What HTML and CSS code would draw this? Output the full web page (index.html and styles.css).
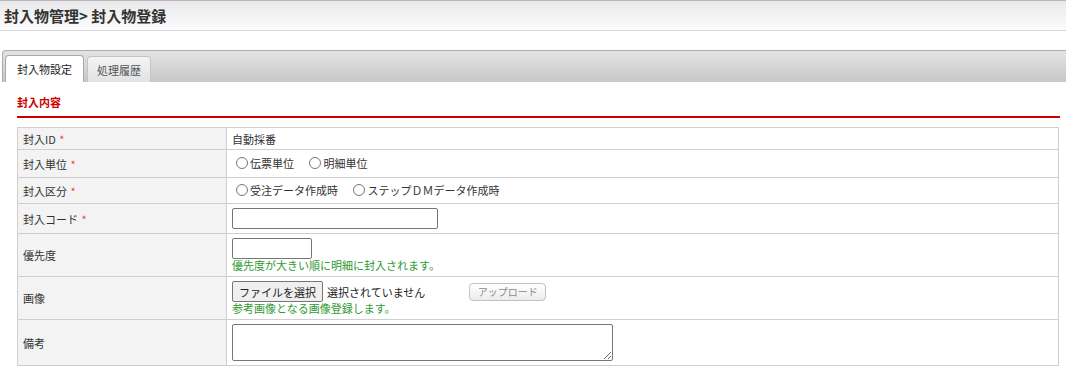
FILE: index.html
```html
<!DOCTYPE html>
<html lang="ja">
<head>
  <meta charset="UTF-8">
  <meta name="viewport" content="width=device-width, initial-scale=1.0">
  <title>封入物登録</title>
  <link rel="stylesheet" href="styles.css">
</head>
<body>
  <div class="page-header">
    <h1>封入物管理&gt; 封入物登録</h1>
  </div>

  <div class="tabs">
    <div class="tab-bar">
      <div class="tab active">封入物設定</div>
      <div class="tab">処理履歴</div>
    </div>

    <div class="panel">
      <h2 class="section-title">封入内容</h2>

      <table class="form-table">
        <tr class="row-id">
          <th>封入ID <span class="req">*</span></th>
          <td>自動採番</td>
        </tr>
        <tr class="row-unit">
          <th>封入単位 <span class="req">*</span></th>
          <td>
            <label class="radio"><input type="radio" name="unit">伝票単位</label>
            <label class="radio"><input type="radio" name="unit">明細単位</label>
          </td>
        </tr>
        <tr class="row-kind">
          <th>封入区分 <span class="req">*</span></th>
          <td>
            <label class="radio"><input type="radio" name="kind">受注データ作成時</label>
            <label class="radio"><input type="radio" name="kind">ステップＤＭデータ作成時</label>
          </td>
        </tr>
        <tr class="row-code">
          <th>封入コード <span class="req">*</span></th>
          <td><input type="text" class="input-code"></td>
        </tr>
        <tr>
          <th>優先度</th>
          <td class="stack">
            <input type="text" class="input-priority">
            <div class="hint">優先度が大きい順に明細に封入されます。</div>
          </td>
        </tr>
        <tr>
          <th>画像</th>
          <td class="stack">
            <div class="file-row">
              <button type="button" class="file-btn">ファイルを選択</button>
              <span class="file-name">選択されていません</span>
              <button type="button" class="upload-btn" disabled>アップロード</button>
            </div>
            <div class="hint">参考画像となる画像登録します。</div>
          </td>
        </tr>
        <tr>
          <th>備考</th>
          <td class="stack"><textarea class="note"></textarea></td>
        </tr>
      </table>
    </div>
  </div>
</body>
</html>
```

FILE: styles.css
```css
body {
  margin: 0;
  font-family: "Noto Sans CJK JP", "Noto Sans", sans-serif;
  font-size: 11px;
  color: #333;
}

.page-header {
  height: 29px;
  padding-left: 4px;
  display: flex;
  align-items: center;
  border-top: 1px solid #b8b5c1;
  border-bottom: 1px solid #d7d5dd;
  background: linear-gradient(#e9e9e9, #fcfcfc);
}

.page-header h1 {
  margin: 0;
  font-size: 15px;
  line-height: 18px;
  font-weight: bold;
  color: #333;
}

.tabs {
  margin: 19px 0 0 2px;
}

.tab-bar {
  height: 26px;
  padding: 5px 0 0 2px;
  display: flex;
  align-items: flex-end;
  gap: 3px;
  border-top: 1px solid #adadad;
  border-left: 1px solid #adadad;
  border-top-left-radius: 4px;
  background: linear-gradient(#e3e3e3, #c8c8c8);
}

.tab {
  height: 25px;
  padding: 0 9px;
  display: flex;
  align-items: center;
  border: 1px solid #c4c4c4;
  border-bottom: none;
  border-radius: 4px 4px 0 0;
  background: linear-gradient(#f4f4f4, #e2e2e2);
  color: #555;
  line-height: 14px;
}

.tab.active {
  height: 26px;
  padding: 0 11px;
  border-color: #a9a9a9;
  background: #fff;
  color: #222;
}

.panel {
  padding: 0 6px 0 15px;
}

.section-title {
  margin: 0;
  padding: 12px 0 6px;
  font-size: 11px;
  line-height: 16px;
  font-weight: bold;
  color: #cc0000;
  border-bottom: 2px solid #cc0000;
}

.form-table {
  width: calc(100% - 1px);
  margin-top: 9px;
  border-collapse: collapse;
  border: 1px solid #cfcfcf;
}

.form-table th,
.form-table td {
  border: 1px solid #cfcfcf;
  padding: 0 5px;
  line-height: 14px;
  vertical-align: middle;
}

.form-table th {
  width: 198px;
  background: #f2f3f2;
  font-weight: normal;
  text-align: left;
  color: #333;
}

.form-table td {
  background: #fff;
}

.row-id { height: 22px; }
.row-unit { height: 28px; }
.row-kind { height: 26px; }
.row-code { height: 30px; }

.form-table td.stack {
  padding-top: 4px;
  padding-bottom: 4px;
}

.req {
  color: #ff3b3b;
  margin-left: 1px;
}

.radio {
  display: inline-flex;
  align-items: center;
  margin-right: 9px;
}

.radio input {
  width: 12px;
  height: 12px;
  margin: 0 2px 0 4px;
}

input[type="text"],
textarea {
  box-sizing: border-box;
  display: block;
  border: 1px solid #767676;
  border-radius: 2px;
  margin: 0;
  font-family: inherit;
  font-size: 11px;
}

.input-code {
  width: 206px;
  height: 21px;
}

.input-priority {
  width: 80px;
  height: 21px;
}

.hint {
  color: #2f9a2f;
  line-height: 13px;
}

.file-row {
  display: flex;
  align-items: center;
}

.file-btn {
  box-sizing: border-box;
  height: 21px;
  padding: 0 6px;
  border: 1px solid #767676;
  border-radius: 2px;
  background: #efefef;
  font-family: inherit;
  font-size: 11px;
  color: #222;
}

.file-name {
  margin-left: 4px;
  color: #222;
}

.upload-btn {
  box-sizing: border-box;
  width: 77px;
  height: 18px;
  margin-left: 44px;
  padding: 0;
  border: 1px solid #c2c2c2;
  border-radius: 4px;
  background: linear-gradient(#ffffff, #ececec);
  font-family: inherit;
  font-size: 10px;
  color: #8a8a8a;
}

.note {
  width: 381px;
  height: 37px;
}
```
